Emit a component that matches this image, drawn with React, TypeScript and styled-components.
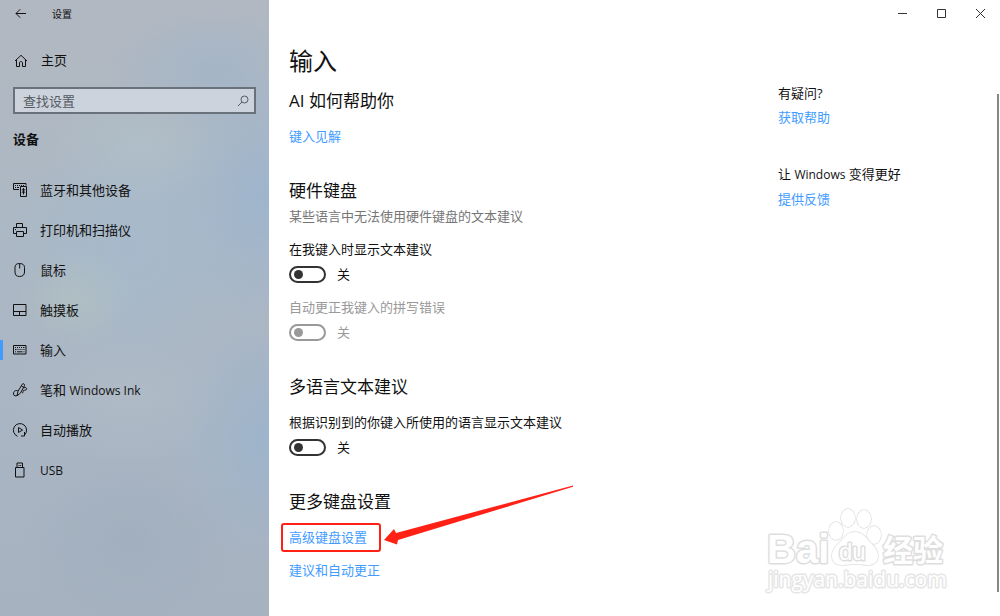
import React from "react";
import styled, { createGlobalStyle } from "styled-components";

const GlobalStyle = createGlobalStyle`
  *, *::before, *::after { box-sizing: border-box; }
  body {
    margin: 0;
    background: #fff;
    color: #111;
    font-family: "Open Sans", "Noto Sans CJK SC", sans-serif;
    font-size: 13px;
    line-height: 20px;
  }
  h1, h2, p, ul { margin: 0; padding: 0; font-weight: 400; }
  button, input { font: inherit; color: inherit; }
`;

const Shell = styled.div`
  position: relative;
  display: flex;
  min-height: 100vh;
`;

const Sidebar = styled.aside`
  flex: 0 0 269px;
  display: flex;
  flex-direction: column;
  background:
    radial-gradient(ellipse 60px 50px at 76px 300px, rgba(182, 196, 192, 0.5), transparent),
    radial-gradient(ellipse 90px 60px at 140px 145px, rgba(176, 194, 202, 0.6), transparent),
    radial-gradient(ellipse 110px 70px at 215px 70px, rgba(160, 180, 200, 0.7), transparent),
    radial-gradient(ellipse 110px 130px at 269px 195px, rgba(154, 180, 207, 0.8), transparent),
    radial-gradient(ellipse 90px 120px at 269px 440px, rgba(154, 180, 205, 0.8), transparent),
    radial-gradient(ellipse 120px 120px at 130px 250px, rgba(165, 186, 205, 0.8), transparent),
    radial-gradient(ellipse 120px 70px at 130px 395px, rgba(178, 188, 200, 0.7), transparent),
    radial-gradient(ellipse 110px 90px at 130px 540px, rgba(158, 172, 187, 0.6), transparent),
    linear-gradient(180deg, #b2b8c1 0%, #acb8c4 35%, #a9b5c3 70%, #a6b2c0 100%);
`;

const SideTitle = styled.div`
  display: flex;
  align-items: center;
  gap: 24px;
  height: 28px;
  padding-left: 12px;
  font-size: 10px;
`;

const IconButton = styled.button`
  display: flex;
  align-items: center;
  justify-content: center;
  padding: 0;
  border: 0;
  background: transparent;
`;

const HomeLink = styled.a`
  display: flex;
  align-items: center;
  gap: 12px;
  height: 40px;
  margin-top: 12px;
  padding-left: 13px;
  color: #111;
  text-decoration: none;
`;

const SearchBox = styled.div`
  display: flex;
  align-items: center;
  height: 27px;
  margin: 7px 13px 0;
  padding: 0 4px 0 8px;
  border: 2px solid #69727b;
  background: #cdd3dd;
  color: #555b63;
`;

const SearchInput = styled.input`
  flex: 1;
  min-width: 0;
  padding: 0;
  border: 0;
  outline: 0;
  background: transparent;
  &::placeholder { color: #555b63; opacity: 1; }
`;

const Category = styled.h2`
  margin: 15px 13px 0;
  font-size: 13px;
  font-weight: 700;
`;

const NavList = styled.ul`
  margin-top: 21px;
  list-style: none;
`;

const NavLink = styled.a<{ $active?: boolean }>`
  position: relative;
  display: flex;
  align-items: center;
  gap: 12px;
  height: 40px;
  padding-left: 12px;
  color: #111;
  text-decoration: none;
  &::before {
    content: "";
    display: ${(p) => (p.$active ? "block" : "none")};
    position: absolute;
    left: 0;
    top: 10px;
    width: 3px;
    height: 20px;
    background: #429cff;
  }
`;

const Latin = styled.span`
  font-size: 12px;
`;

const Main = styled.main`
  flex: 1;
  min-width: 0;
  display: flex;
  flex-direction: column;
`;

const WindowBar = styled.div`
  display: flex;
  justify-content: flex-end;
  height: 28px;
`;

const WindowButton = styled(IconButton)`
  width: 39px;
  height: 27px;
  color: #333;
`;

const Body = styled.div`
  flex: 1;
  display: flex;
`;

const Content = styled.div`
  flex: 1;
  min-width: 0;
  padding: 17px 20px 34px;
`;

const PageTitle = styled.h1`
  font-size: 24px;
  line-height: 32px;
`;

const Section = styled.section`
  margin-top: 33px;
  &:first-of-type { margin-top: 12px; }
`;

const SectionTitle = styled.h2`
  font-size: 17px;
  line-height: 24px;
`;

const Hint = styled.p`
  margin-top: 3px;
  color: #767676;
`;

const TextLink = styled.a`
  color: #429cff;
  text-decoration: none;
`;

const LinkRow = styled.div`
  margin-top: 13px;
`;

const Marked = styled.span`
  position: relative;
  &::before {
    content: "";
    position: absolute;
    inset: -5px -14px -6px -8px;
    border: 2px solid #ff2116;
    border-radius: 3px;
    pointer-events: none;
  }
`;

const Arrow = styled.svg`
  position: absolute;
  left: 94px;
  top: -44px;
  pointer-events: none;
`;

const Setting = styled.div<{ $disabled?: boolean }>`
  margin-top: 13px;
  color: ${(p) => (p.$disabled ? "#999" : "#111")};
`;

const SettingLabel = styled.label`
  display: block;
`;

const SwitchRow = styled.div`
  display: flex;
  align-items: center;
  gap: 11px;
  margin-top: 5px;
`;

const Switch = styled.input`
  appearance: none;
  display: flex;
  align-items: center;
  width: 37px;
  height: 17px;
  margin: 0;
  padding-left: 3px;
  border: 2px solid #333;
  border-radius: 9px;
  &::before {
    content: "";
    width: 9px;
    height: 9px;
    border-radius: 50%;
    background: #333;
  }
  &:checked { justify-content: flex-end; padding: 0 3px 0 0; }
  &:disabled { border-color: #999; }
  &:disabled::before { background: #999; }
`;

const Help = styled.aside`
  flex: 0 0 219px;
  padding-top: 55px;
`;

const HelpGroup = styled.div`
  display: flex;
  flex-direction: column;
  align-items: flex-start;
  gap: 4px;
  margin-bottom: 37px;
`;

const ScrollThumb = styled.div`
  flex: 0 0 2px;
  margin: 66px 1px 24px 0;
  background: #868686;
`;

const Watermark = styled.svg`
  position: absolute;
  right: 50px;
  bottom: 18px;
  pointer-events: none;
  font-family: "Liberation Sans", "Noto Sans CJK SC", sans-serif;
`;

const Icon = ({ children, size = 16 }: { children: React.ReactNode; size?: number }) => (
  <svg width={size} height={size} viewBox={`0 0 ${size} ${size}`} fill="none" stroke="currentColor" strokeWidth="1" aria-hidden="true">
    {children}
  </svg>
);

const navItems = [
  {
    label: "蓝牙和其他设备",
    icon: (
      <>
        <path d="M7 7.5H1.5v-6h12.5v2M3 3.5h1M5 3.5h1M7 3.5h1M9 3.5h1M11 3.5h1M3 5.5h1M5 5.5h2" />
        <path d="M8.5 4.5h6v10h-6zM11.500 6v6.500M10 7.200l3 3.600M13 7.200l-3 3.600" />
      </>
    ),
  },
  {
    label: "打印机和扫描仪",
    icon: (
      <>
        <path d="M4.5 5.5v-4h6v4M4 11.5H1.5v-6h13v6H12" />
        <path d="M4.5 9.5h7v5h-7zM3 7.5h1" />
      </>
    ),
  },
  { label: "鼠标", icon: <path d="M7.500 1.500c3 0 5 1.200 5 4v4.500c0 3-2 4.500-5 4.500s-4.500-1.500-4.500-4.500V5.500c0-2.800 1.500-4 4.500-4zM7.700 2v4.500" /> },
  { label: "触摸板", icon: <path d="M1.5 2.5h12.5v11H1.5zM1.5 9.5H14M7.5 9.5v4" /> },
  {
    label: "输入",
    active: true,
    icon: (
      <path d="M1.5 3.5h12.500v8.500H1.5zM3 5.5h1M5 5.5h1M7 5.5h1M9 5.5h1M11 5.5h1.5M3 7.500h1.500M5.500 7.500h1M7.500 7.500h1M9.500 7.500h1M11.500 7.500h1M3 9.800h1M5 9.800h5.500M11.500 9.800h1" />
    ),
  },
  {
    label: "笔和",
    latin: "Windows Ink",
    icon: (
      <>
        <path d="M5 13.800 6 9.300 10.200 2.300c.9-1.300 3-.2 2.300 1.300L8.500 11 5 13.800zM9.300 4l2.300 1.300" />
        <path d="M5.800 8.800C3.500 7.800 1.200 9.500 1.500 12c.3 2.300 2.800 2.300 3.800 1.200M12 5.300c2.300-.2 3.300 1.500 2.300 2.400s-2.800-.2-3.100 1.100c-.2 1 .2 1.900-1.200 2.300" />
      </>
    ),
  },
  {
    label: "自动播放",
    icon: (
      <>
        <path d="M5.500 14.300A6.600 6.600 0 1 1 12.500 13M12.500 10v4h-3.500" />
        <path d="M6.500 5.500v5l4-2.500z" />
      </>
    ),
  },
  { label: "", latin: "USB", icon: <path d="M5 5.500v-4.500h5.500v4.500M3.500 5.500h8.500v9.500H3.500zM6.500 3.500h1M8.200 3.500h1" /> },
];

function Toggle({ id, label, disabled }: { id: string; label: string; disabled?: boolean }) {
  return (
    <Setting $disabled={disabled}>
      <SettingLabel htmlFor={id}>{label}</SettingLabel>
      <SwitchRow>
        <Switch id={id} type="checkbox" role="switch" disabled={disabled} />
        <span>关</span>
      </SwitchRow>
    </Setting>
  );
}

export default function App() {
  return (
    <>
      <GlobalStyle />
      <Shell lang="zh-CN">
        <Sidebar>
          <SideTitle>
            <IconButton aria-label="返回">
              <Icon><path d="M14 7.5H4M8.2 3.3 4 7.5l4.2 4.200" /></Icon>
            </IconButton>
            <span>设置</span>
          </SideTitle>
          <HomeLink href="#home">
            <Icon><path d="M2 9 8 3.300l6 5.700M3.500 8v6.500H6.500V11c0-2 3-2 3 0v3.500h3V8" /></Icon>
            主页
          </HomeLink>
          <SearchBox>
            <SearchInput type="search" placeholder="查找设置" aria-label="查找设置" />
            <Icon size={14}>
              <circle cx="8.500" cy="5.500" r="3.500" />
              <path d="M6 8 2 12" />
            </Icon>
          </SearchBox>
          <Category>设备</Category>
          <nav>
            <NavList>
              {navItems.map((item) => (
                <li key={item.label}>
                  <NavLink href="#" $active={item.active}>
                    <Icon>{item.icon}</Icon>
                    <span>
                      {item.label}
                      {item.label && item.latin ? " " : ""}
                      {item.latin && <Latin>{item.latin}</Latin>}
                    </span>
                  </NavLink>
                </li>
              ))}
            </NavList>
          </nav>
        </Sidebar>
        <Main>
          <WindowBar>
            <WindowButton aria-label="最小化"><Icon size={11}><path d="M1 5.500h9" /></Icon></WindowButton>
            <WindowButton aria-label="最大化"><Icon size={11}><path d="M1.500 1.500h8v8h-8z" /></Icon></WindowButton>
            <WindowButton aria-label="关闭"><Icon size={11}><path d="m1 1 9 9M10 1 1 10" /></Icon></WindowButton>
          </WindowBar>
          <Body>
            <Content>
              <PageTitle>输入</PageTitle>
              <Section>
                <SectionTitle>AI 如何帮助你</SectionTitle>
                <LinkRow><TextLink href="#insights">键入见解</TextLink></LinkRow>
              </Section>
              <Section>
                <SectionTitle>硬件键盘</SectionTitle>
                <Hint>某些语言中无法使用硬件键盘的文本建议</Hint>
                <Toggle id="suggest" label="在我键入时显示文本建议" />
                <Toggle id="autocorrect" label="自动更正我键入的拼写错误" disabled />
              </Section>
              <Section>
                <SectionTitle>多语言文本建议</SectionTitle>
                <Toggle id="multilingual" label="根据识别到的你键入所使用的语言显示文本建议" />
              </Section>
              <Section>
                <SectionTitle>更多键盘设置</SectionTitle>
                <LinkRow>
                  <Marked>
                    <TextLink href="#advanced">高级键盘设置</TextLink>
                    <Arrow width="192" height="62" viewBox="0 0 192 62" aria-hidden="true">
                      <path d="M1 56 11 45l2 4L190 1.500v1.200L15 56l-1 4.500z" fill="#ff2116" />
                    </Arrow>
                  </Marked>
                </LinkRow>
                <LinkRow><TextLink href="#suggestions">建议和自动更正</TextLink></LinkRow>
              </Section>
            </Content>
            <Help>
              <HelpGroup>
                <span>有疑问?</span>
                <TextLink href="#help">获取帮助</TextLink>
              </HelpGroup>
              <HelpGroup>
                <span>让 <Latin>Windows</Latin> 变得更好</span>
                <TextLink href="#feedback">提供反馈</TextLink>
              </HelpGroup>
            </Help>
            <ScrollThumb />
          </Body>
        </Main>
        <Watermark width="186" height="92" viewBox="0 0 186 92" fill="#fff" stroke="#dedede" strokeWidth="3" strokeLinejoin="round" paintOrder="stroke">
          <text x="3" y="57" fontSize="40" fontWeight="700">Bai</text>
          <g strokeWidth="1.500">
            <ellipse cx="72" cy="25" rx="7" ry="9" />
            <ellipse cx="84" cy="12" rx="7" ry="9" />
            <ellipse cx="100" cy="13" rx="7" ry="9" />
            <ellipse cx="110" cy="29" rx="7" ry="9" />
            <path d="M91 26c8 0 11 6 15 10s8 8 8 14c0 6-4 9-10 9-5 0-8-1-13-1s-8 1-13 1c-6 0-10-3-10-9s4-10 8-14 7-10 15-10z" />
          </g>
          <text x="75" y="54" fontSize="24" fontWeight="400" strokeWidth="3">du</text>
          <text x="119" y="55" fontSize="30" fontWeight="700">经验</text>
          <text x="4" y="81" fontFamily="Open Sans" fontSize="21" strokeWidth="3" stroke="#e6e6e6">jingyan.baidu.com</text>
        </Watermark>
      </Shell>
    </>
  );
}
